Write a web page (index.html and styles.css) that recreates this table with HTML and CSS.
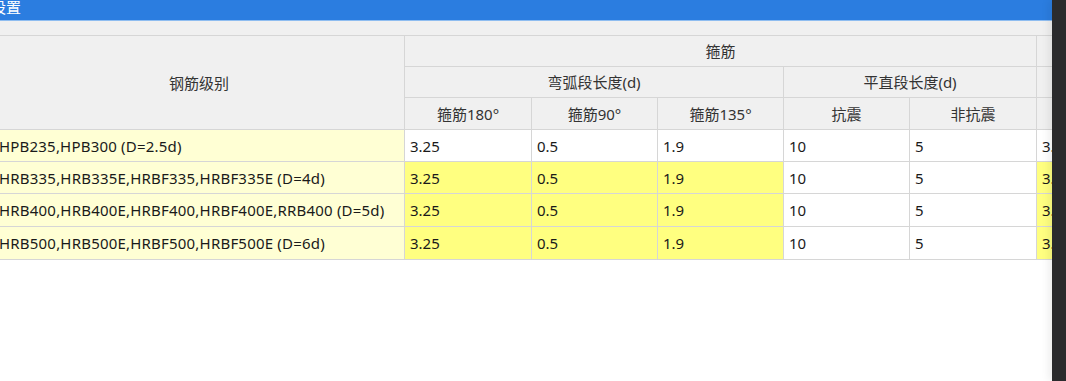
FILE: index.html
```html
<!DOCTYPE html>
<html lang="zh-CN">
<head>
<meta charset="utf-8">
<title>设置</title>
<link rel="stylesheet" href="styles.css">
</head>
<body>
<div class="screen">
  <div class="dialog">
    <div class="titlebar"><span class="title">设置</span></div>
    <div class="toolstrip"></div>
    <div class="grid-wrap">
      <table class="grid">
        <colgroup>
          <col class="c-name">
          <col class="c-a"><col class="c-b"><col class="c-c"><col class="c-d"><col class="c-e"><col class="c-f">
        </colgroup>
        <thead>
          <tr class="hr">
            <th rowspan="3">钢筋级别</th>
            <th colspan="5">箍筋</th>
            <th></th>
          </tr>
          <tr class="hr">
            <th colspan="3">弯弧段长度(d)</th>
            <th colspan="2">平直段长度(d)</th>
            <th></th>
          </tr>
          <tr class="hr hr-last">
            <th>箍筋180°</th>
            <th>箍筋90°</th>
            <th>箍筋135°</th>
            <th>抗震</th>
            <th>非抗震</th>
            <th></th>
          </tr>
        </thead>
        <tbody>
          <tr>
            <td class="name">HPB235,HPB300 (D=2.5d)</td>
            <td>3.25</td><td>0.5</td><td>1.9</td><td>10</td><td>5</td><td>3.25</td>
          </tr>
          <tr>
            <td class="name">HRB335,HRB335E,HRBF335,HRBF335E (D=4d)</td>
            <td class="hl">3.25</td><td class="hl">0.5</td><td class="hl">1.9</td><td>10</td><td>5</td><td class="hl">3.25</td>
          </tr>
          <tr class="tall">
            <td class="name">HRB400,HRB400E,HRBF400,HRBF400E,RRB400 (D=5d)</td>
            <td class="hl">3.25</td><td class="hl">0.5</td><td class="hl">1.9</td><td>10</td><td>5</td><td class="hl">3.25</td>
          </tr>
          <tr class="tall">
            <td class="name">HRB500,HRB500E,HRBF500,HRBF500E (D=6d)</td>
            <td class="hl">3.25</td><td class="hl">0.5</td><td class="hl">1.9</td><td>10</td><td>5</td><td class="hl">3.25</td>
          </tr>
        </tbody>
      </table>
    </div>
  </div>
  <div class="edge"></div>
</div>
</body>
</html>
```
FILE: styles.css
```css
html, body {
  margin: 0;
  padding: 0;
  width: 1066px;
  height: 381px;
  overflow: hidden;
  background: #ffffff;
}
.screen {
  display: flex;
  width: 1066px;
  height: 381px;
  font-family: "Noto Sans", "Noto Sans CJK SC", sans-serif;
}
.dialog {
  width: 1052px;
  height: 381px;
  display: flex;
  flex-direction: column;
  overflow: hidden;
  background: #ffffff;
}
.edge {
  width: 14px;
  height: 381px;
  background: #2b2b2d;
  box-shadow: -3px 0 8px rgba(0, 0, 0, 0.08);
}
.titlebar {
  height: 21px;
  flex: none;
  background: #2b7de0;
  border-bottom: 1px solid #8fbdf0;
  box-sizing: border-box;
  display: flex;
  align-items: center;
  overflow: hidden;
}
.title {
  margin-left: -9px;
  margin-top: -6px;
  color: #ffffff;
  font-family: "Noto Sans CJK SC", sans-serif;
  font-size: 15px;
  line-height: 20px;
}
.toolstrip {
  height: 14px;
  flex: none;
  background: #f0f0f0;
}
.grid-wrap {
  flex: none;
  overflow: hidden;
}
.grid {
  margin-left: -7px;
  border-collapse: collapse;
  table-layout: fixed;
  width: 1180px;
  font-size: 15px;
}
.c-name { width: 411px; }
.c-a { width: 127px; }
.c-b { width: 126px; }
.c-c { width: 126px; }
.c-d { width: 126px; }
.c-e { width: 127px; }
.c-f { width: 137px; }
.grid th, .grid td {
  border: 1px solid #d6d6d6;
  padding: 0 5px;
  white-space: nowrap;
  overflow: hidden;
  line-height: 18px;
}
.grid th {
  background: #f0f0f0;
  color: #333333;
  font-weight: normal;
  font-size: 15px;
  text-align: center;
  height: 30px;
}
.grid .hr-last th {
  height: 31px;
}
.grid td {
  height: 31px;
  color: #1a1a1a;
  text-align: left;
  background: #ffffff;
}
.grid .tall td {
  height: 32px;
}
.grid td.name {
  background: #ffffd4;
  letter-spacing: 0.2px;
}
.grid td.hl {
  background: #ffff80;
}
```
